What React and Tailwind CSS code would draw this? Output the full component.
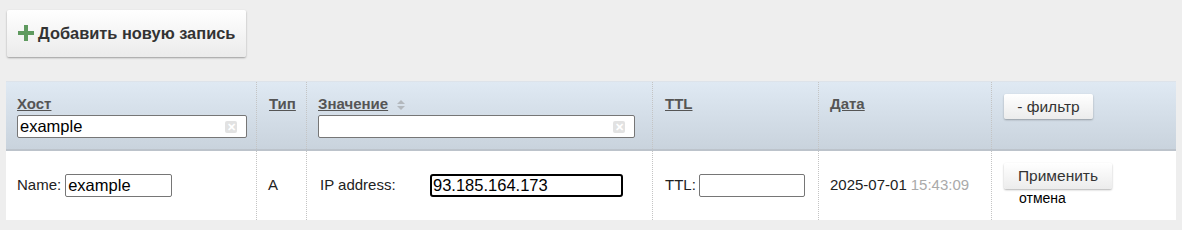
export default function App() {
  const font = { fontFamily: '"Liberation Sans", Arial, sans-serif' };
  const cell = "border-l border-dotted border-[#c4c4c4]";

  return (
    <div className="w-[1182px] h-[230px] bg-[#eeeeee] pt-[10px] pl-[6px]" style={font}>
      {/* Add button */}
      <button className="ml-px flex items-center h-[47px] w-[239px] pl-[11px] rounded-[2px] bg-gradient-to-b from-white to-[#ebebeb] shadow-[0_1px_2px_rgba(0,0,0,0.35)] text-[16.4px] font-bold text-[#333]">
        <svg width="16" height="16" viewBox="0 0 16 16" className="mr-[4px] mt-[-2px]">
          <rect x="6" y="0" width="4" height="16" fill="#5f9a5f" />
          <rect x="0" y="6" width="16" height="4" fill="#5f9a5f" />
        </svg>
        Добавить новую запись
      </button>

      {/* Table */}
      <div className="mt-[24px] w-[1170px] bg-white">
        {/* Header */}
        <div className="grid grid-cols-[250px_50px_346px_166px_173px_185px] h-[70px] border-t border-[#dde3ea] border-b-2 border-b-[#bcc3cb] bg-gradient-to-b from-[#dfe9f3] to-[#c9d3dd] text-[15px] leading-[17px] font-bold text-[#555]">
          <div className="pl-[11px] pt-[13px]">
            <span className="underline">Хост</span>
            <div className="relative mt-[3px] w-[230px] h-[23px] bg-white border border-[#767676] rounded-[2px]">
              <span className="pl-[2px] text-[16.5px] font-normal text-black leading-[21px]">example</span>
              <span className="absolute right-[9px] top-[5px] w-[12px] h-[12px] bg-[#e2e2e2] rounded-[2px] flex items-center justify-center text-white text-[11px] leading-none">✕</span>
            </div>
          </div>
          <div className={`${cell} pl-[12px] pt-[13px]`}>
            <span className="underline">Тип</span>
          </div>
          <div className={`${cell} pl-[11px] pt-[13px]`}>
            <span className="underline">Значение</span>
            <svg width="8" height="10" viewBox="0 0 8 10" className="inline-block ml-[9px] mb-[1px]">
              <path d="M4 0 L8 4 L0 4 Z" fill="#b3b8bd" />
              <path d="M4 10 L8 6 L0 6 Z" fill="#b3b8bd" />
            </svg>
            <div className="relative mt-[3px] w-[317px] h-[23px] bg-white border border-[#767676] rounded-[2px]">
              <span className="absolute right-[9px] top-[5px] w-[12px] h-[12px] bg-[#e2e2e2] rounded-[2px] flex items-center justify-center text-white text-[11px] leading-none">✕</span>
            </div>
          </div>
          <div className={`${cell} pl-[12px] pt-[13px]`}>
            <span className="underline">TTL</span>
          </div>
          <div className={`${cell} pl-[11px] pt-[13px]`}>
            <span className="underline">Дата</span>
          </div>
          <div className={`${cell} pl-[12px] pt-[12px]`}>
            <button className="h-[25px] w-[89px] rounded-[2px] bg-gradient-to-b from-white to-[#ececec] shadow-[0_1px_2px_rgba(0,0,0,0.3)] text-[15.5px] font-normal text-[#333]">
              - фильтр
            </button>
          </div>
        </div>

        {/* Row */}
        <div className="grid grid-cols-[250px_50px_346px_166px_173px_185px] h-[69px] text-[15px] text-[#222]">
          <div className="flex items-center pl-[11px]">
            <span className="mr-[4px]">Name:</span>
            <div className="w-[107px] h-[23px] border border-[#767676] rounded-[2px] pl-[2px] text-[16.5px] leading-[21px] text-black">example</div>
          </div>
          <div className={`${cell} flex items-center pl-[11px]`}>A</div>
          <div className={`${cell} flex items-center pl-[13px]`}>
            <span className="w-[110px]">IP address:</span>
            <div className="w-[193px] h-[23px] border-2 border-black rounded-[3px] pl-px text-[16.5px] leading-[19px] text-black">93.185.164.173</div>
          </div>
          <div className={`${cell} flex items-center pl-[12px]`}>
            <span className="mr-[3px]">TTL:</span>
            <div className="w-[106px] h-[23px] border border-[#767676] rounded-[2px]"></div>
          </div>
          <div className={`${cell} flex items-center pl-[11px]`}>
            2025-07-01<span className="ml-[4px] text-[#aaa]">15:43:09</span>
          </div>
          <div className={`${cell} pl-[12px] pt-[12px]`}>
            <button className="h-[26px] w-[108px] rounded-[2px] bg-gradient-to-b from-white to-[#ececec] shadow-[0_1px_2px_rgba(0,0,0,0.3)] text-[15.5px] text-[#333]">
              Применить
            </button>
            <div className="pl-[15px] text-[14px] leading-[14px] mt-[2px] text-black">отмена</div>
          </div>
        </div>
      </div>
    </div>
  );
}
